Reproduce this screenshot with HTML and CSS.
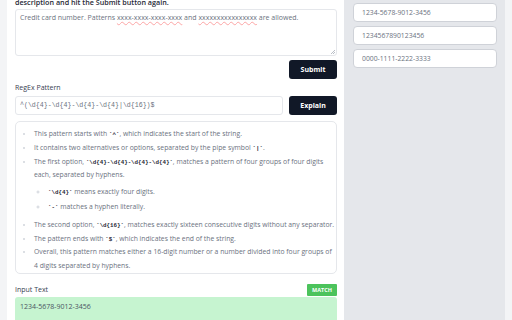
FILE: index.html
```html
<!DOCTYPE html>
<html lang="en">
<head>
<meta charset="utf-8">
<title>RegEx Explainer</title>
<link rel="stylesheet" href="styles.css">
</head>
<body>
<div class="page">
  <main class="main">
    <p class="intro">description and hit the Submit button again.</p>
    <div class="textarea">Credit card number. Patterns <span class="sp">xxxx-xxxx-xxxx-xxxx</span> and <span class="sp">xxxxxxxxxxxxxxxx</span> are allowed.<svg class="grip" width="5" height="5" viewBox="0 0 5 5"><path d="M1 5L5 1M3 5L5 3" stroke="#9ca3af" stroke-width="0.7"/></svg></div>
    <div class="actions"><button class="btn">Submit</button></div>
    <div class="label">RegEx Pattern</div>
    <div class="pattern-row">
      <div class="pattern">^(\d{4}-\d{4}-\d{4}-\d{4}|\d{16})$</div>
      <button class="btn">Explain</button>
    </div>
    <div class="explain">
      <ul class="list">
        <li>This pattern starts with <code>^</code>, which indicates the start of the string.</li>
        <li>It contains two alternatives or options, separated by the pipe symbol <code class="pipe">|</code>.</li>
        <li>The first option, <code>\d{4}-\d{4}-\d{4}-\d{4}</code>, matches a pattern of four groups of four digits<br>each, separated by hyphens.
          <ul class="sublist">
            <li><code>\d{4}</code> means exactly four digits.</li>
            <li><code>-</code> matches a hyphen literally.</li>
          </ul>
        </li>
        <li>The second option, <code>\d{16}</code>, matches exactly sixteen consecutive digits without any separator.</li>
        <li>The pattern ends with <code>$</code>, which indicates the end of the string.</li>
        <li>Overall, this pattern matches either a 16-digit number or a number divided into four groups of<br>4 digits separated by hyphens.</li>
      </ul>
    </div>
    <div class="label-row"><span class="label">Input Text</span><span class="badge">MATCH</span></div>
    <div class="test-input">1234-5678-9012-3456</div>
  </main>
  <aside class="sidebar">
    <div class="sample">1234-5678-9012-3456</div>
    <div class="sample">1234567890123456</div>
    <div class="sample">0000-1111-2222-3333</div>
  </aside>
</div>
</body>
</html>
```

FILE: styles.css
```css
* { box-sizing: border-box; }
html, body { margin: 0; height: 100%; }
body {
  background: #f3f4f6;
  font-family: "Open Sans", Lato, sans-serif;
  color: #374151;
  overflow: hidden;
}
.page {
  display: flex;
  height: 320px;
  padding: 0 7px;
}
.main {
  flex: 0 0 337px;
  background: #ffffff;
  padding: 0 7px 0 8px;
  display: flex;
  flex-direction: column;
  overflow: hidden;
}
.main > * { flex-shrink: 0; }
.intro {
  margin: -3px 0 2px;
  font-size: 7.2px;
  line-height: 10px;
  font-weight: 600;
  color: #1f2937;
}
.textarea {
  position: relative;
  height: 47px;
  border: 1px solid #e5e7eb;
  border-radius: 3px;
  padding: 3px 5px 0 4px;
  font-size: 7px;
  line-height: 10px;
  color: #6b7280;
}
.sp {
  text-decoration: underline wavy #fca5a5;
  text-decoration-thickness: 0.5px;
  text-underline-offset: 1px;
}
.grip { position: absolute; right: 1px; bottom: 1px; }
.actions { display: flex; justify-content: flex-end; margin-top: 4px; }
.btn {
  height: 19px;
  width: 48px;
  border: 0;
  border-radius: 3px;
  background: #111827;
  color: #ffffff;
  font-family: "Open Sans", Lato, sans-serif;
  font-size: 7px;
  font-weight: 700;
  padding: 0;
}
.label {
  font-size: 7px;
  line-height: 10px;
  color: #374151;
  font-weight: 500;
}
.main > .label { margin-top: 4px; }
.pattern-row { display: flex; gap: 6px; margin-top: 3px; }
.pattern {
  flex: 1;
  height: 19px;
  border: 1px solid #e5e7eb;
  border-radius: 3px;
  padding: 0 4px;
  font-family: "Liberation Mono", monospace;
  font-size: 6.6px;
  line-height: 17px;
  color: #6b7280;
}
.explain {
  margin-top: 6px;
  height: 153px;
  border: 1px solid #e5e7eb;
  border-radius: 5px;
  padding: 5px 0 0 0;
  font-size: 6.8px;
  line-height: 13.8px;
  color: #6b7280;
  overflow: hidden;
}
.list { margin: 0; padding-left: 18px; }
.list li { white-space: nowrap; }
.list li::marker { color: #d1d5db; }
.sublist { margin: 3px 0 3.5px; padding-left: 14px; }
.sublist li + li { margin-top: 1.5px; }
code {
  font-family: "Liberation Mono", monospace;
  font-size: 5.8px;
  line-height: 8px;
  font-weight: 700;
  color: #1f2937;
}
code::before, code::after { content: "`"; }
.label-row {
  display: flex;
  justify-content: space-between;
  align-items: center;
  margin-top: 10px;
  height: 12px;
}
.badge {
  background: #4cc35c;
  color: #ffffff;
  font-size: 5.5px;
  font-weight: 700;
  padding: 0 5px;
  line-height: 12px;
  border-radius: 1px;
}
.test-input {
  margin-top: 1px;
  height: 40px;
  background: #c6f4d0;
  border-radius: 3px 3px 0 0;
  padding: 5px 5px 0;
  font-size: 7px;
  line-height: 10px;
  color: #4b5563;
}
.sidebar {
  flex: 1;
  background: #e5e7eb;
  padding: 3px 8px 0 9px;
  display: flex;
  flex-direction: column;
  gap: 4px;
}
.sample {
  height: 19px;
  background: #ffffff;
  border: 1px solid #cfd2d8;
  border-radius: 4px;
  padding: 0 8px;
  font-size: 6.8px;
  line-height: 17px;
  color: #6b7280;
}
```
